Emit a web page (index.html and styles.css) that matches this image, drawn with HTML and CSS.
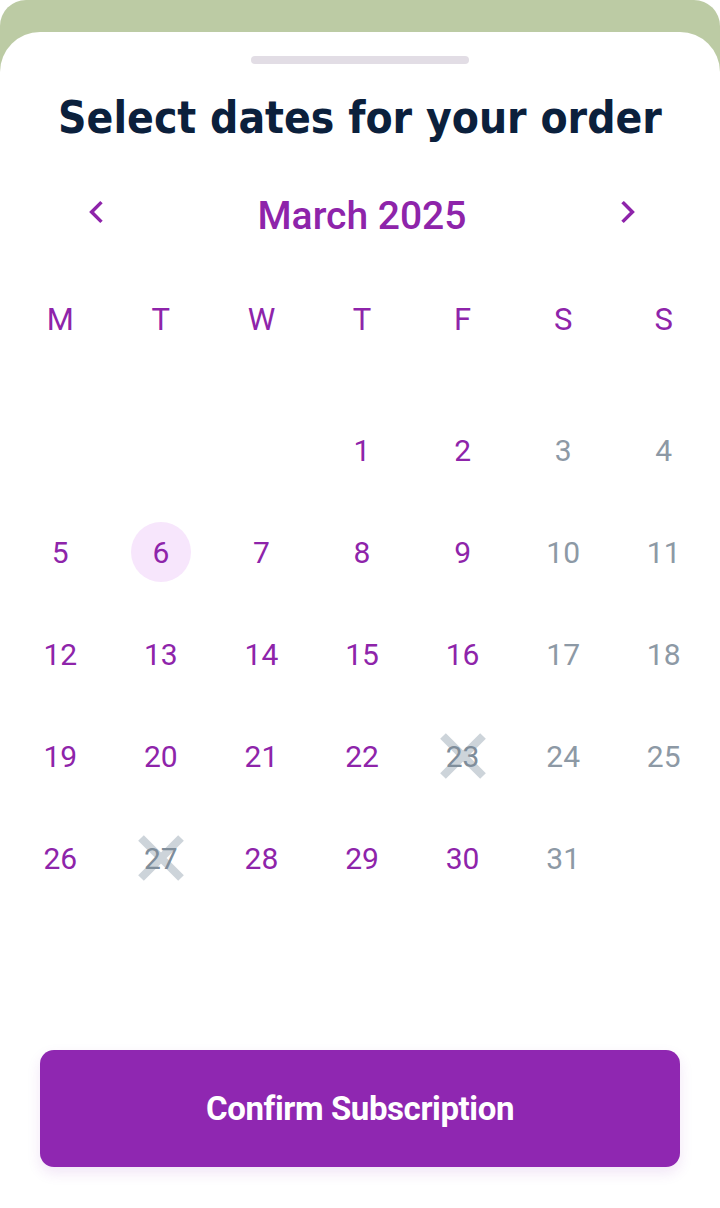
FILE: index.html
```html
<!DOCTYPE html>
<html>
<head>
<meta charset="utf-8">
<link rel="stylesheet" href="styles.css">
</head>
<body>
<div class="screen">
  <div class="sheet">
    <div class="handle"></div>
    <h1 class="title">Select dates for your order</h1>
    <div class="month-bar">
      <button class="nav prev" aria-label="Previous month">
        <svg viewBox="0 0 24 24" width="26" height="26"><path d="M15 4 L7 12 L15 20" fill="none" stroke="#8e24aa" stroke-width="3.2" stroke-linecap="square"/></svg>
      </button>
      <div class="month">March 2025</div>
      <button class="nav next" aria-label="Next month">
        <svg viewBox="0 0 24 24" width="26" height="26"><path d="M9 4 L17 12 L9 20" fill="none" stroke="#8e24aa" stroke-width="3.2" stroke-linecap="square"/></svg>
      </button>
    </div>
    <div class="weekdays">
      <span>M</span><span>T</span><span>W</span><span>T</span><span>F</span><span>S</span><span>S</span>
    </div>
    <div class="days">
      <span class="day"></span><span class="day"></span><span class="day"></span>
      <span class="day">1</span><span class="day">2</span><span class="day off">3</span><span class="day off">4</span>
      <span class="day">5</span><span class="day selected"><i class="dot"></i><b>6</b></span><span class="day">7</span><span class="day">8</span><span class="day">9</span><span class="day off">10</span><span class="day off">11</span>
      <span class="day">12</span><span class="day">13</span><span class="day">14</span><span class="day">15</span><span class="day">16</span><span class="day off">17</span><span class="day off">18</span>
      <span class="day">19</span><span class="day">20</span><span class="day">21</span><span class="day">22</span><span class="day blocked"><svg class="cross" viewBox="0 0 48 48"><path d="M4 4 L44 44 M44 4 L4 44" stroke="#cdd4da" stroke-width="8"/></svg><b>23</b></span><span class="day off">24</span><span class="day off">25</span>
      <span class="day">26</span><span class="day blocked"><svg class="cross" viewBox="0 0 48 48"><path d="M4 4 L44 44 M44 4 L4 44" stroke="#cdd4da" stroke-width="8"/></svg><b>27</b></span><span class="day">28</span><span class="day">29</span><span class="day">30</span><span class="day off">31</span><span class="day"></span>
    </div>
    <div class="actions">
      <button class="confirm">Confirm Subscription</button>
    </div>
  </div>
</div>
</body>
</html>
```
FILE: styles.css
```css
html, body {
  margin: 0;
  padding: 0;
  background: #ffffff;
}
.screen {
  width: 720px;
  height: 1208px;
  overflow: hidden;
  background: linear-gradient(#bccba4 0, #bccba4 80px, #ffffff 80px);
  border-radius: 26px 26px 0 0;
}
.sheet {
  margin-top: 32px;
  height: 1176px;
  background: #ffffff;
  border-radius: 40px 40px 0 0;
  display: flex;
  flex-direction: column;
  font-family: Roboto, "Liberation Sans", sans-serif;
}
.handle {
  width: 218px;
  height: 8px;
  border-radius: 4px;
  background: #e2dde5;
  margin: 24px auto 0;
}
.title {
  margin: 26px 0 0;
  text-align: center;
  font-family: "DejaVu Sans", sans-serif;
  font-stretch: condensed;
  font-weight: 700;
  font-size: 44px;
  line-height: 56px;
  color: #0b203c;
  letter-spacing: 0;
}
.month-bar {
  display: flex;
  align-items: center;
  justify-content: space-between;
  padding: 0 80px 0 84px;
  margin-top: 46px;
  height: 48px;
}
.nav {
  border: 0;
  background: none;
  padding: 0;
  width: 26px;
  height: 26px;
  display: flex;
  position: relative;
  top: -4px;
}
.month {
  font-size: 39px;
  font-weight: 500;
  color: #8e24aa;
}
.weekdays, .days {
  display: grid;
  grid-template-columns: repeat(7, 1fr);
  padding: 0 6px 0 10px;
  text-align: center;
}
.weekdays {
  margin-top: 59px;
  height: 40px;
  align-items: center;
  font-size: 31px;
  color: #8e24aa;
}
.days {
  margin-top: 60px;
  grid-auto-rows: 102px;
  font-size: 30px;
  color: #8e24aa;
}
.day {
  position: relative;
  display: flex;
  align-items: center;
  justify-content: center;
  height: 102px;
}
.day b {
  font-weight: 400;
  position: relative;
}
.day.off {
  color: #8d99a5;
}
.day.blocked {
  color: #7f8d9a;
}
.dot {
  position: absolute;
  width: 60px;
  height: 60px;
  border-radius: 50%;
  background: #f7e6fc;
  left: 50%;
  top: 50%;
  transform: translate(-50%, -50%);
}
.cross {
  position: absolute;
  width: 48px;
  height: 48px;
  left: 50%;
  top: 50%;
  transform: translate(-50%, -50%);
}
.actions {
  margin-top: auto;
  padding: 0 40px 41px;
}
.confirm {
  width: 100%;
  height: 117px;
  border: 0;
  border-radius: 14px;
  background: #8f27b1;
  color: #ffffff;
  font-family: Roboto, "Liberation Sans", sans-serif;
  font-size: 33px;
  font-weight: 700;
  letter-spacing: -0.4px;
  box-shadow: 0 6px 14px rgba(143, 39, 177, 0.12);
}
```
